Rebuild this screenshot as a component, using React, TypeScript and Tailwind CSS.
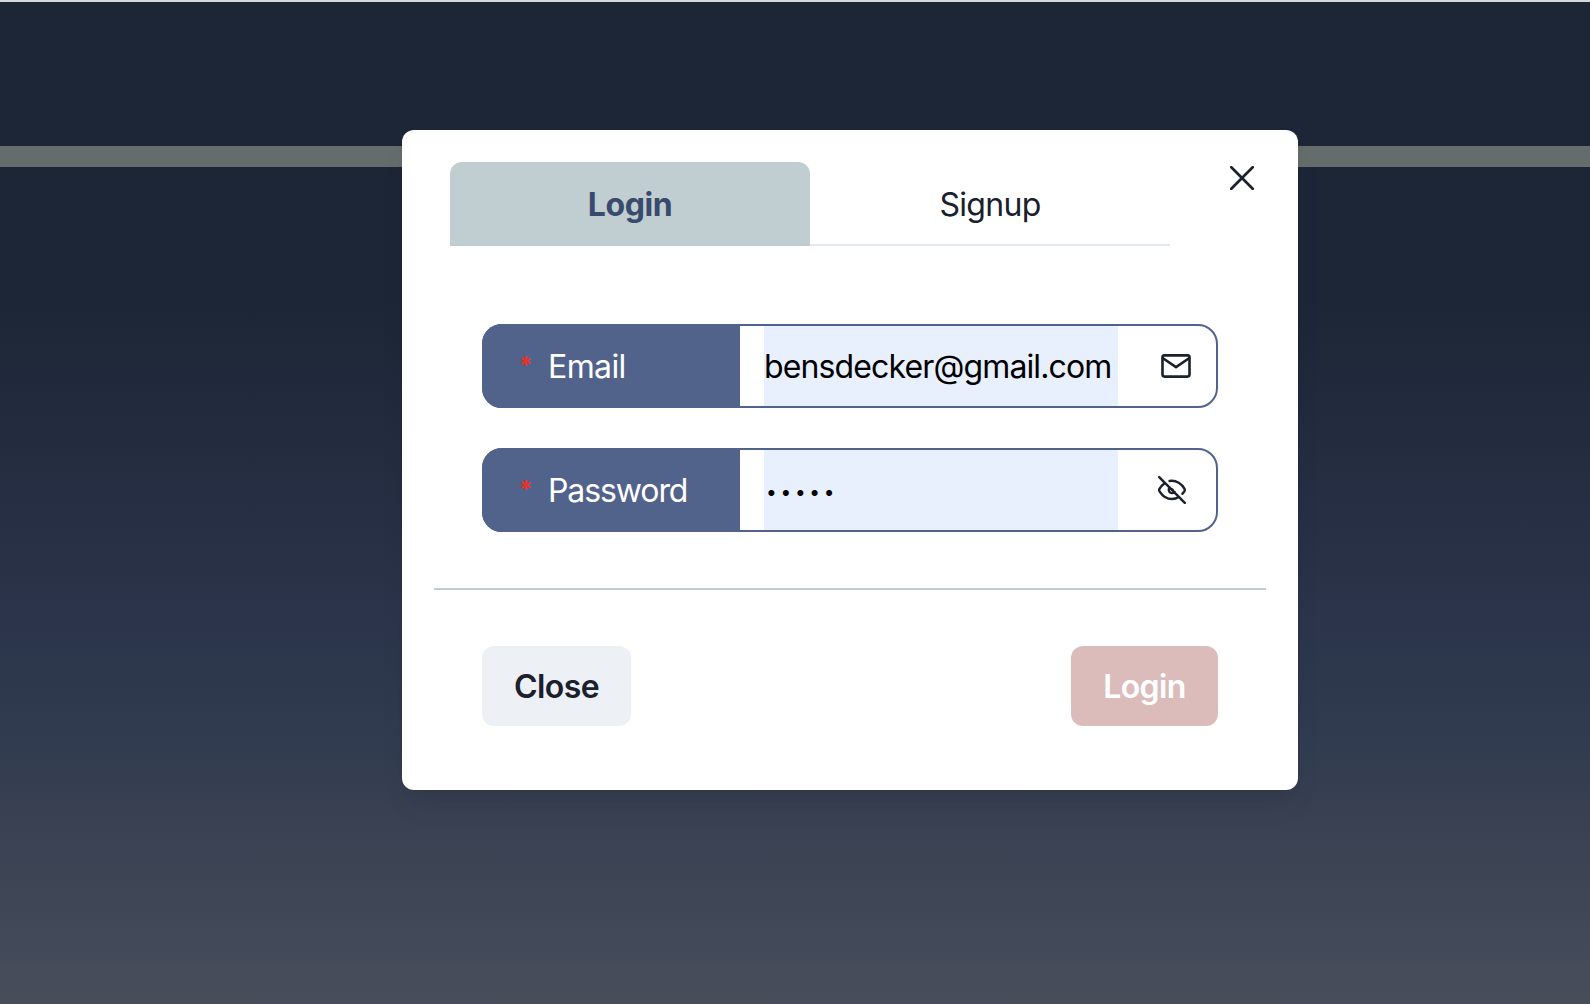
const field = "flex h-[84px] w-full rounded-[20px] border-2 border-[#52638b]";
const label = "-my-0.5 -ml-0.5 flex w-[258px] items-center rounded-l-[20px] bg-[#52638b] pt-0.5 pl-[37px] text-white";
const asterisk = "-mt-0.5 w-[29px] text-[24px] font-bold text-[#ea3223]";

export default function App() {
  return (
    <div className="flex h-[1004px] w-full flex-col bg-[linear-gradient(180deg,#1d2636_0%,#1d2636_30%,#293147_56%,#2f3a4f_71%,#394152_82%,#434b5a_95%,#494d5a_100%)] font-['Inter',sans-serif] text-[32px] tracking-[-0.6px] text-[#1a202c]">
      <div className="h-0.5 bg-[#d5d8dd]" />
      <div className="mt-36 h-[21px] bg-[#646c6c]" />
      <main className="relative -mt-[37px] ml-[402px] flex h-[660px] w-[896px] flex-col rounded-xl bg-white px-8 pt-8 shadow-[0_20px_30px_-6px_rgba(0,0,0,0.07),0_8px_12px_-4px_rgba(0,0,0,0.04)]">
        <div className="flex justify-between pl-4">
          <div className="flex h-[84px] w-[720px]" role="tablist">
            <button className="flex w-1/2 items-center justify-center rounded-t-xl bg-[#c0cdd1] pt-0.5 font-bold tracking-[-0.45px] text-[#394a6d]">Login</button>
            <button className="flex w-1/2 items-center justify-center border-b-2 border-[#e2e8f0] pt-1 tracking-[-0.7px]">Signup</button>
          </div>
          <button aria-label="Close" className="mt-1 mr-3 flex size-6">
            <svg viewBox="0 0 24 24" className="size-6" fill="none" stroke="currentColor" strokeWidth="2.7" strokeLinecap="round">
              <path d="M1.3 1.3 22.7 22.7M22.7 1.3 1.3 22.7" />
            </svg>
          </button>
        </div>
        <form className="mt-[78px] flex flex-col gap-10 px-12">
          <div className={field}>
            <div className={label}>
              <span className={asterisk}>*</span>Email
            </div>
            <div className="ml-6 flex w-[354px] items-center bg-[#e8effd] pt-0.5 tracking-[-0.87px] text-black">bensdecker@gmail.com</div>
            <svg viewBox="0 0 30 24" className="mt-7 ml-[43px] h-6 w-[30px]" fill="none" stroke="currentColor" strokeWidth="2.6" strokeLinecap="round" strokeLinejoin="round">
              <rect x="1.5" y="1.4" width="27" height="21.2" rx="2" />
              <path d="M2 4.2 15 13.1 28 4.2" />
            </svg>
          </div>
          <div className={field}>
            <div className={label}>
              <span className={asterisk}>*</span>
              <span className="tracking-[-1.1px]">Password</span>
            </div>
            <div className="ml-6 flex w-[354px] items-center bg-[#e8effd] pt-[7px] pl-0.5 text-[19px] tracking-[3.75px] text-black">•••••</div>
            <svg viewBox="0 0 28 28" className="mt-[26px] ml-10 size-7" fill="none" stroke="currentColor" strokeWidth="2.4" strokeLinecap="round" strokeLinejoin="round">
              <path d="M1.2 1.2 26.8 26.8" />
              <path d="M11.6 5C18.5 3.8 24 8.3 26.4 12.6Q27.2 14 26.3 15.4L24.4 17.8" />
              <path d="M6 7.7C4 9.1 2.5 11 1.5 12.8Q.8 14 1.5 15.3C4.5 20 8.8 23 14 23C16.5 23 18.8 22.3 20.8 21" />
              <path d="M11.6 11.6A3.3 3.3 0 1 0 16.6 16M14.3 13.5A2 2 0 0 1 15 14.5" />
            </svg>
          </div>
        </form>
        <hr className="mt-14 border-t-2 border-[#c0cdd1]" />
        <footer className="mt-14 flex justify-between px-12 font-semibold">
          <button className="h-20 w-[149px] rounded-xl bg-[#edf1f6] pt-0.5">Close</button>
          <button className="h-20 w-[147px] rounded-xl bg-[#dbbcbb] pt-0.5 text-white">Login</button>
        </footer>
      </main>
    </div>
  );
}
